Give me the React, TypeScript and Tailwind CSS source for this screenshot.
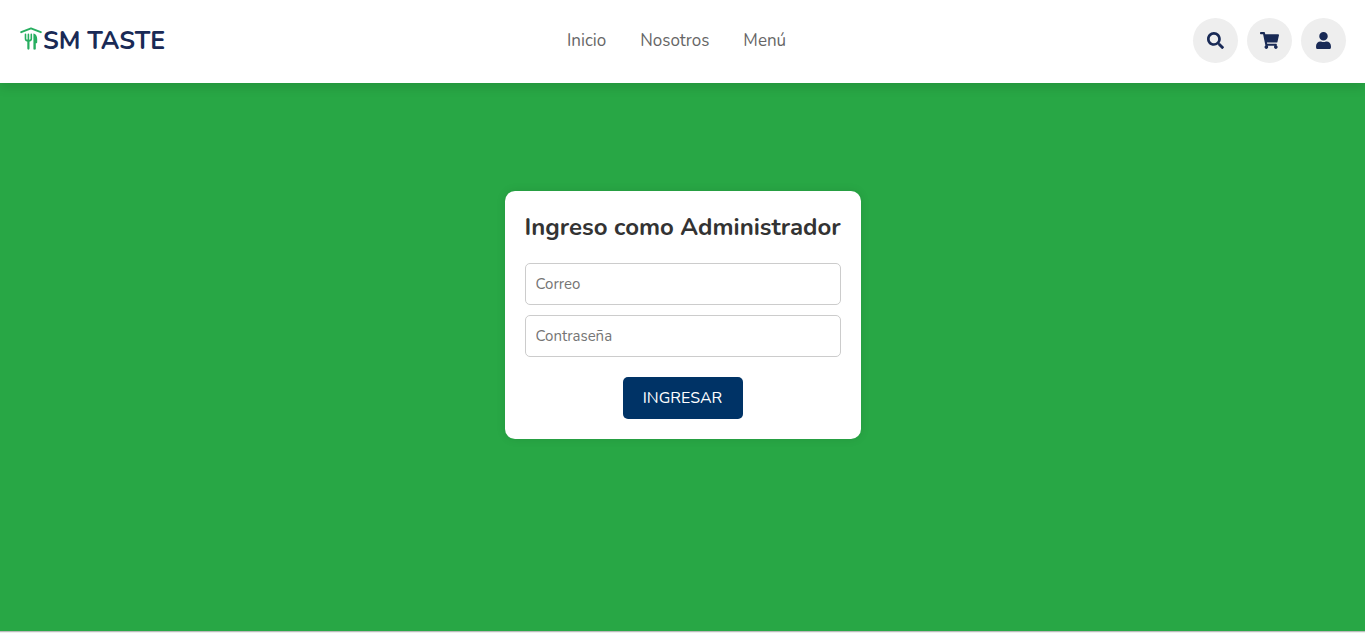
import React from "react";
import { FaSearch, FaShoppingCart, FaUser } from "react-icons/fa";

const links = [
  { label: "Inicio", href: "#inicio" },
  { label: "Nosotros", href: "#nosotros" },
  { label: "Menú", href: "#menu" },
];

function Logo() {
  return (
    <svg viewBox="0 0 22 24" className="mb-1 h-6 w-[22px]" aria-hidden="true" fill="none" stroke="#27ae60">
      <path d="M1.2 5.2 11 1.4l9.8 3.8" strokeWidth="1.9" strokeLinecap="round" strokeLinejoin="round" />
      <path d="M5.5 7.4v4.4q0 2.2 2.9 2.2t2.9-2.2V7.4M8.4 7.4v6" strokeWidth="1.6" strokeLinecap="round" />
      <path d="M8.4 13v8.6" strokeWidth="2.2" strokeLinecap="round" />
      <path d="M13.4 6.6c2.4.4 3.8 2.6 3.8 5.4v3.2c0 .6-.4 1-1 1h-.4v5.6c0 1.2-2.4 1.2-2.4 0z" fill="#27ae60" stroke="none" />
    </svg>
  );
}

function RoundButton({ label, children }: { label: string; children: React.ReactNode }) {
  return (
    <button
      type="button"
      aria-label={label}
      className="flex size-[45px] cursor-pointer items-center justify-center rounded-full bg-[#eee] text-[#192a56]"
    >
      {children}
    </button>
  );
}

function Field({ id, type, label }: { id: string; type: string; label: string }) {
  return (
    <input
      id={id}
      type={type}
      aria-label={label}
      placeholder={label}
      className="block h-[42px] w-full rounded-[5px] border border-[#ccc] bg-white px-2.5 text-[15px] text-[#333] placeholder:text-[#757575]"
    />
  );
}

export default function App() {
  return (
    <div className="flex min-h-screen flex-col font-['Nunito','Lato',sans-serif]">
      <header className="z-10 flex h-[83px] items-center justify-between bg-white pr-[19px] pb-0.5 pl-5 shadow-[0_5px_10px_rgba(0,0,0,0.1)]">
        <a href="#inicio" className="flex items-center gap-px text-[25px] font-bold text-[#192a56]">
          <Logo />
          <span className="pt-0.5">SM TASTE</span>
        </a>
        <nav className="flex gap-[34px] pr-[5px] text-[17px] text-[#666]">
          {links.map((link) => (
            <a key={link.href} href={link.href}>{link.label}</a>
          ))}
        </nav>
        <div className="flex gap-[9px]">
          <RoundButton label="Buscar"><FaSearch className="size-[17px]" /></RoundButton>
          <RoundButton label="Carrito"><FaShoppingCart className="h-[17px] w-[19px]" /></RoundButton>
          <RoundButton label="Usuario"><FaUser className="size-[17px]" /></RoundButton>
        </div>
      </header>
      <main className="flex grow flex-col items-center justify-center bg-[#28a745] pb-[84px]">
        <form className="flex w-[356px] max-w-full flex-col rounded-[10px] bg-white p-5 shadow-[0_0_10px_rgba(0,0,0,0.1)]">
          <h1 className="mb-5 text-center text-2xl font-bold whitespace-nowrap text-[#333]">Ingreso como Administrador</h1>
          <div className="flex flex-col gap-2.5">
            <Field id="correo" type="email" label="Correo" />
            <Field id="contrasena" type="password" label="Contraseña" />
          </div>
          <button type="submit" className="mt-5 h-[42px] w-[120px] cursor-pointer self-center rounded-[5px] bg-[#036] text-base text-white">
            INGRESAR
          </button>
        </form>
      </main>
      <footer className="h-0.5 border-t border-[#bbb] bg-[#eee]" />
    </div>
  );
}
